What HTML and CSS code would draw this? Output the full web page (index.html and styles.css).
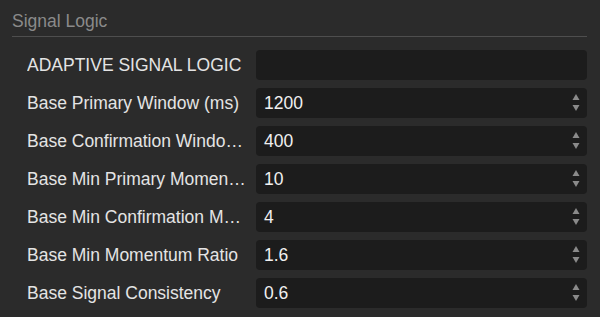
FILE: index.html
```html
<!DOCTYPE html>
<html>
<head>
<meta charset="utf-8">
<link rel="stylesheet" href="styles.css">
</head>
<body>
<div class="panel">
  <div class="title">Signal Logic</div>
  <div class="rows">
    <div class="row"><div class="label">ADAPTIVE SIGNAL LOGIC</div><div class="field"></div></div>
    <div class="row"><div class="label">Base Primary Window (ms)</div><div class="field"><span class="val">1200</span><svg class="spin" width="8" height="18" viewBox="0 0 8 18"><path d="M4 0 L7.5 6 L0.5 6 Z"/><path d="M0.5 11 L7.5 11 L4 17 Z"/></svg></div></div>
    <div class="row"><div class="label">Base Confirmation Window (ms)</div><div class="field"><span class="val">400</span><svg class="spin" width="8" height="18" viewBox="0 0 8 18"><path d="M4 0 L7.5 6 L0.5 6 Z"/><path d="M0.5 11 L7.5 11 L4 17 Z"/></svg></div></div>
    <div class="row"><div class="label">Base Min Primary Momentum</div><div class="field"><span class="val">10</span><svg class="spin" width="8" height="18" viewBox="0 0 8 18"><path d="M4 0 L7.5 6 L0.5 6 Z"/><path d="M0.5 11 L7.5 11 L4 17 Z"/></svg></div></div>
    <div class="row"><div class="label">Base Min Confirmation Momentum</div><div class="field"><span class="val">4</span><svg class="spin" width="8" height="18" viewBox="0 0 8 18"><path d="M4 0 L7.5 6 L0.5 6 Z"/><path d="M0.5 11 L7.5 11 L4 17 Z"/></svg></div></div>
    <div class="row"><div class="label">Base Min Momentum Ratio</div><div class="field"><span class="val">1.6</span><svg class="spin" width="8" height="18" viewBox="0 0 8 18"><path d="M4 0 L7.5 6 L0.5 6 Z"/><path d="M0.5 11 L7.5 11 L4 17 Z"/></svg></div></div>
    <div class="row"><div class="label">Base Signal Consistency</div><div class="field"><span class="val">0.6</span><svg class="spin" width="8" height="18" viewBox="0 0 8 18"><path d="M4 0 L7.5 6 L0.5 6 Z"/><path d="M0.5 11 L7.5 11 L4 17 Z"/></svg></div></div>
  </div>
</div>
</body>
</html>
```
FILE: styles.css
```css
html, body {
  margin: 0;
  padding: 0;
  background: #2b2b2b;
  height: 100%;
  overflow: hidden;
}
body {
  font-family: "Liberation Sans", Arial, sans-serif;
  font-size: 17.5px;
}
.panel {
  padding: 0 13px 0 12px;
}
.title {
  color: #8a8a8a;
  height: 36px;
  line-height: 42px;
  border-bottom: 1px solid #4e4e4e;
  box-sizing: content-box;
}
.rows {
  display: flex;
  flex-direction: column;
  gap: 8px;
  padding: 13px 0 0 15px;
}
.row {
  display: flex;
  align-items: center;
  gap: 9px;
  height: 30px;
}
.label {
  width: 220px;
  flex: none;
  color: #e4e4e4;
  white-space: nowrap;
  overflow: hidden;
  text-overflow: ellipsis;
}
.field {
  flex: 1;
  height: 30px;
  background: #1c1c1c;
  border-radius: 4px;
  display: flex;
  align-items: center;
  justify-content: space-between;
  padding: 0 7px 0 8px;
  box-sizing: border-box;
}
.val {
  color: #f0f0f0;
}
.spin {
  fill: #8a8a8a;
  display: block;
}
```
